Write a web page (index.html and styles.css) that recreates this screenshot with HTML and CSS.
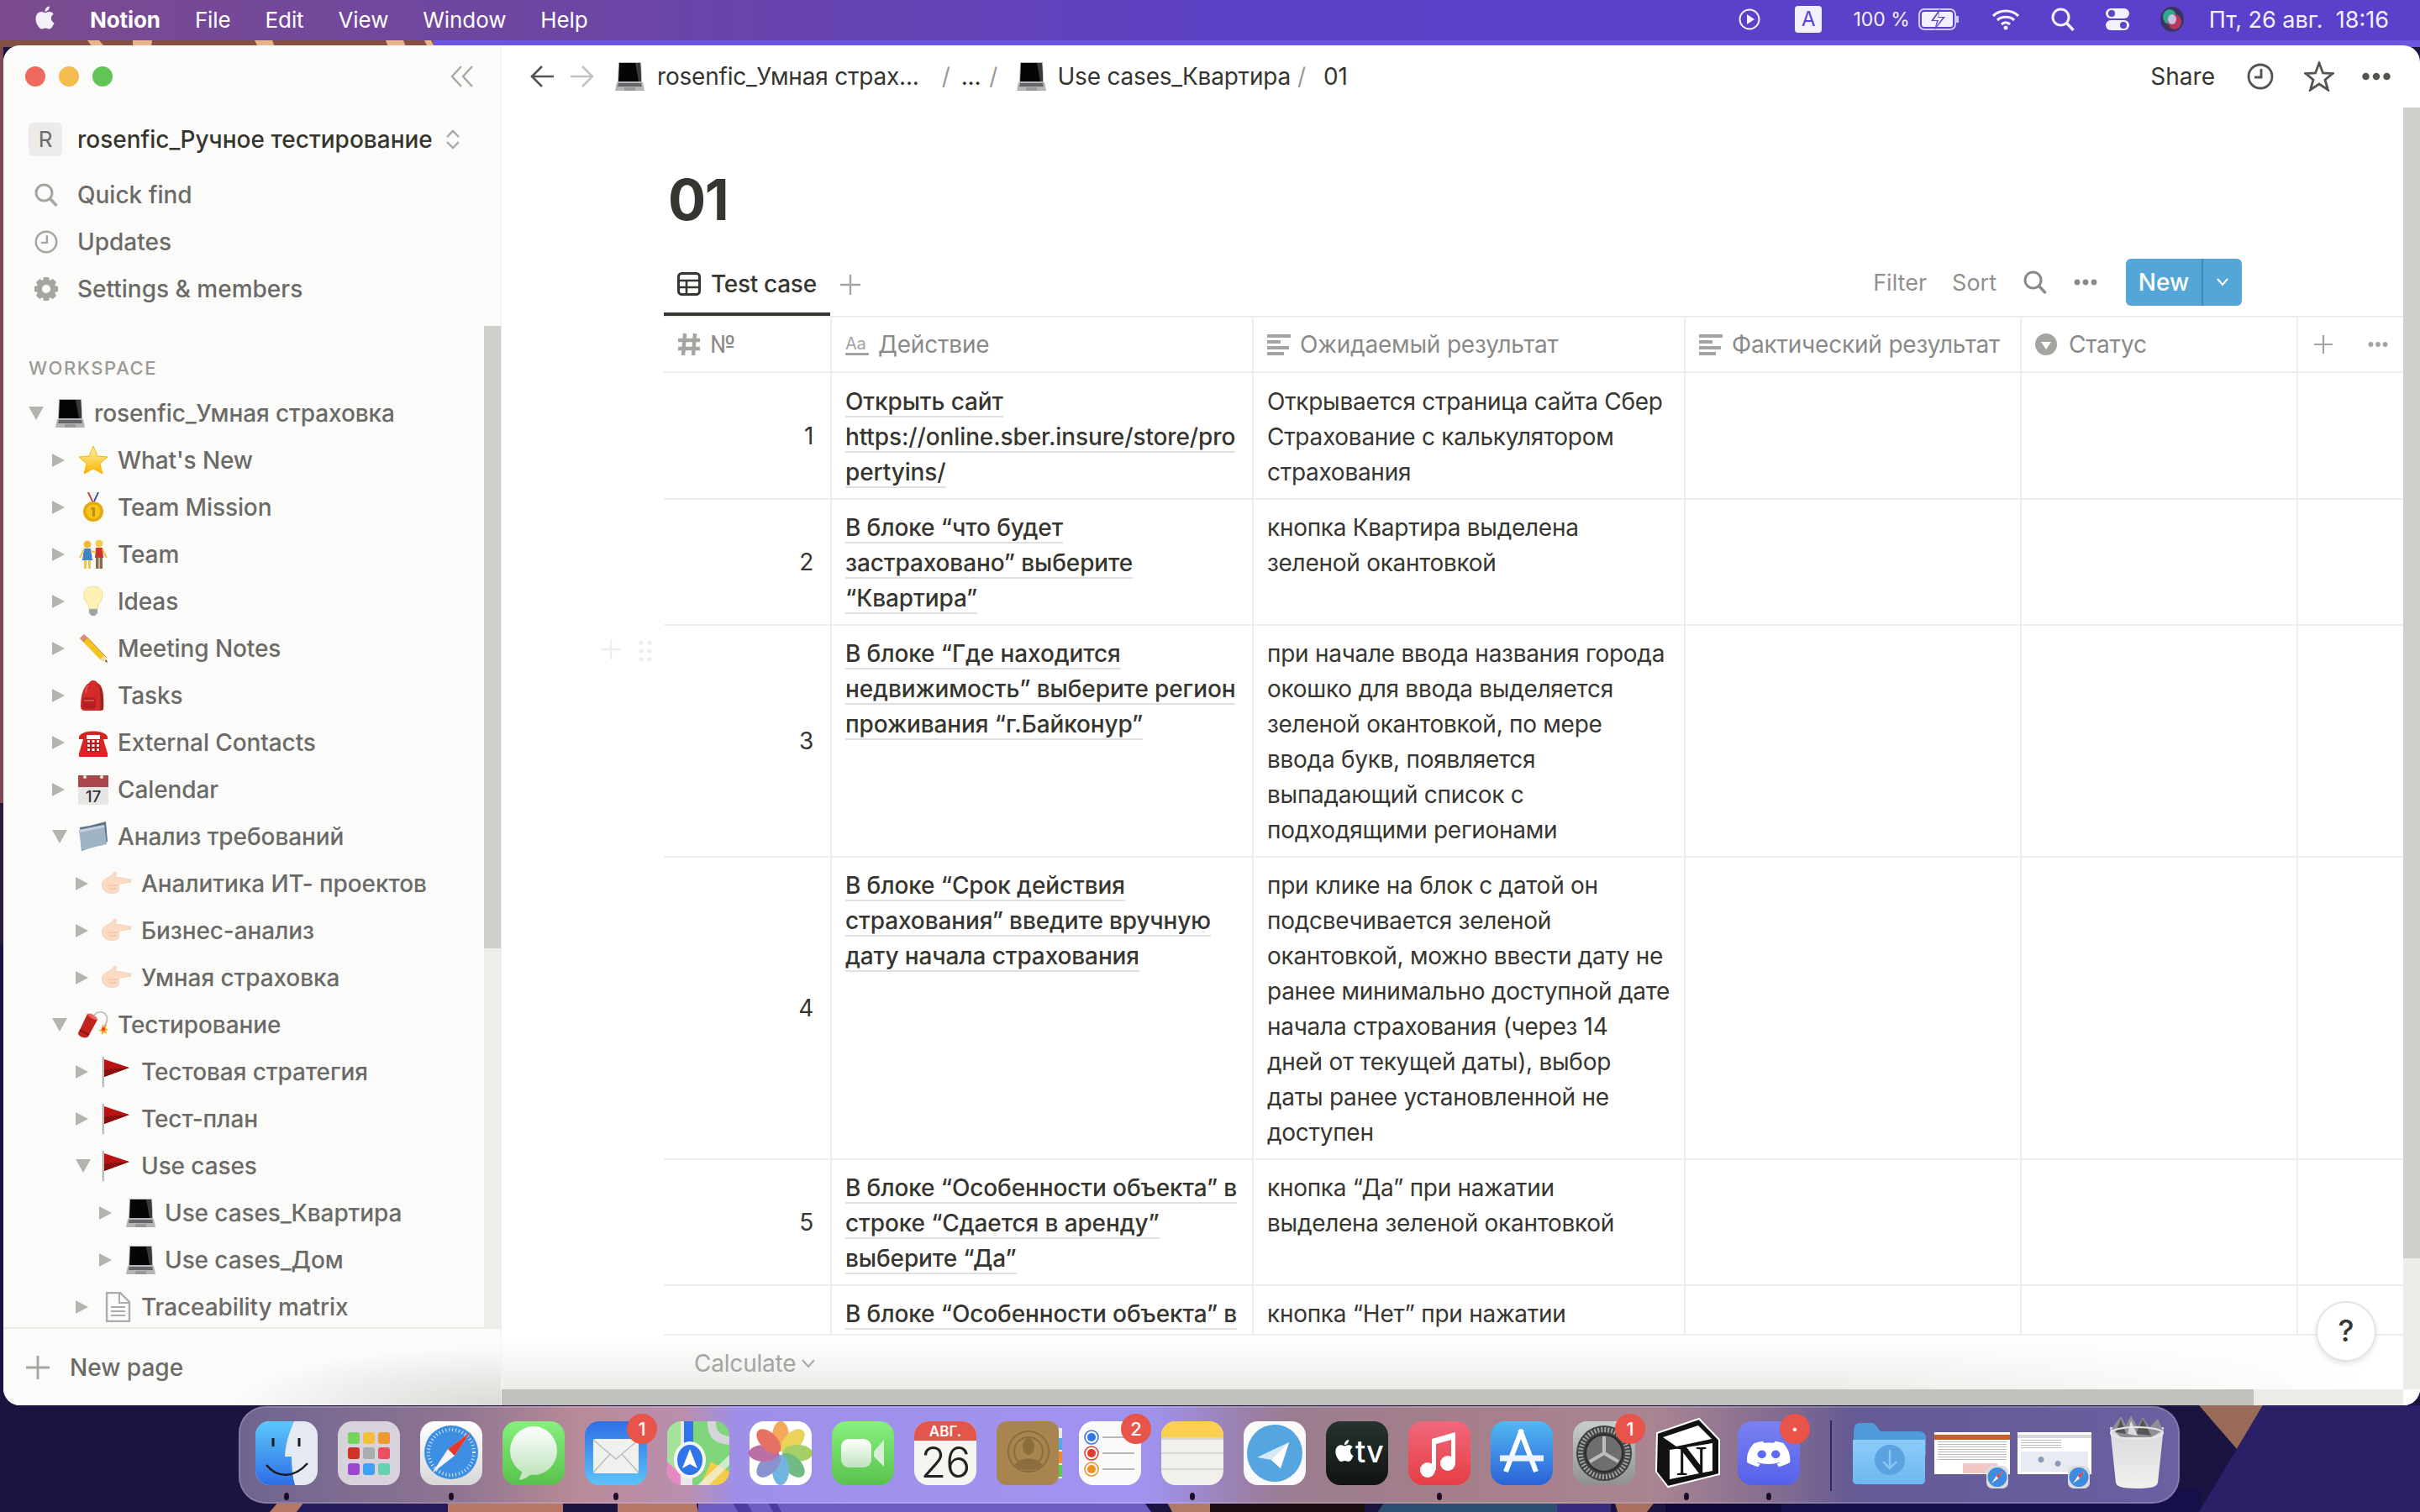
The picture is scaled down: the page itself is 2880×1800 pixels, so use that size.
FILE: index.html
```html
<!DOCTYPE html>
<html lang="ru">
<head>
  <meta charset="UTF-8">
  <title>Notion</title>
  <link rel="stylesheet" href="styles.css">
</head>
<body>

  <!-- shared icons -->
  <svg class="defs" width="0" height="0">
    <defs>
      <clipPath id="sq"><rect width="74" height="76" rx="17"/></clipPath>
      <linearGradient id="gStar" x1="0" y1="0" x2="0" y2="1"><stop offset="0" stop-color="#fff3b0"/><stop offset="1" stop-color="#f7b500"/></linearGradient>
      <linearGradient id="gFinder" x1="0" y1="0" x2="0" y2="1"><stop offset="0" stop-color="#5ac8fa"/><stop offset="1" stop-color="#2f6de6"/></linearGradient>
      <linearGradient id="gGreen" x1="0" y1="0" x2="0" y2="1"><stop offset="0" stop-color="#86ef7e"/><stop offset="1" stop-color="#58c24c"/></linearGradient>
      <linearGradient id="gMail" x1="0" y1="0" x2="0" y2="1"><stop offset="0" stop-color="#2f6fe6"/><stop offset="1" stop-color="#5cc3fa"/></linearGradient>
      <linearGradient id="gStore" x1="0" y1="0" x2="0" y2="1"><stop offset="0" stop-color="#52b8f2"/><stop offset="1" stop-color="#2a62d8"/></linearGradient>
      <linearGradient id="gMusic" x1="0" y1="0" x2="0" y2="1"><stop offset="0" stop-color="#f0687c"/><stop offset="1" stop-color="#e63e44"/></linearGradient>
      <linearGradient id="gDiscord" x1="0" y1="0" x2="0" y2="1"><stop offset="0" stop-color="#7b81f2"/><stop offset="1" stop-color="#5561ea"/></linearGradient>
      <linearGradient id="gTv" x1="0" y1="0" x2="0" y2="1"><stop offset="0" stop-color="#26332f"/><stop offset="1" stop-color="#101413"/></linearGradient>
      <linearGradient id="gGear" x1="0" y1="0" x2="0" y2="1"><stop offset="0" stop-color="#c8cdce"/><stop offset="1" stop-color="#8f9190"/></linearGradient>
      <linearGradient id="gBubble" x1="0" y1="0" x2="0" y2="1"><stop offset="0" stop-color="#ffffff"/><stop offset="1" stop-color="#bfe3bd"/></linearGradient>
      <linearGradient id="gSafari" x1="0" y1="0" x2="0" y2="1"><stop offset="0" stop-color="#ffffff"/><stop offset="1" stop-color="#d8d8d8"/></linearGradient>
      <linearGradient id="gTrash" x1="0" y1="0" x2="0" y2="1"><stop offset="0" stop-color="#d8d8dc"/><stop offset="1" stop-color="#f2f1ee"/></linearGradient>
      <linearGradient id="gFolder" x1="0" y1="0" x2="0" y2="1"><stop offset="0" stop-color="#8ccbf8"/><stop offset="1" stop-color="#6db8f0"/></linearGradient>

      <symbol id="apple" viewBox="0 0 24 24"><path d="M12.152 6.896c-.948 0-2.415-1.078-3.96-1.04-2.04.027-3.91 1.183-4.961 3.014-2.117 3.675-.546 9.103 1.519 12.09 1.013 1.454 2.208 3.09 3.792 3.039 1.52-.065 2.09-.987 3.935-.987 1.831 0 2.35.987 3.96.948 1.637-.026 2.676-1.48 3.676-2.948 1.156-1.688 1.636-3.325 1.662-3.415-.039-.013-3.182-1.221-3.22-4.857-.026-3.04 2.48-4.494 2.597-4.559-1.429-2.09-3.623-2.324-4.39-2.376-2-.156-3.675 1.09-4.61 1.09zM15.53 3.83c.843-1.012 1.4-2.427 1.245-3.83-1.207.052-2.662.805-3.532 1.818-.78.896-1.454 2.338-1.273 3.714 1.338.104 2.715-.688 3.559-1.701"/></symbol>

      <symbol id="caret-r" viewBox="0 0 15 16"><path d="M0 0L15 8L0 16Z" fill="#b4b3b0"/></symbol>
      <symbol id="caret-d" viewBox="0 0 18 16"><path d="M0 0H18L9 16Z" fill="#b4b3b0"/></symbol>

      <symbol id="laptop" viewBox="0 0 36 36">
        <path d="M5 1H32L33 25H4Z" fill="#b9b9bb"/>
        <path d="M6 2H31L32 24H5Z" fill="#050505"/>
        <path d="M25 2H31L32 24H29Z" fill="#3a3a3c"/>
        <path d="M3 25H34L36 35H1Z" fill="#b4b4b6"/>
        <path d="M5 26H32L33 30H4Z" fill="#66666a"/>
        <rect x="12" y="31" width="13" height="4" fill="#98989c"/>
      </symbol>
      <symbol id="star" viewBox="0 0 36 36">
        <path d="M18 1L23 13L35 14L26 22L29 34L18 28L7 34L10 22L1 14L13 13Z" fill="url(#gStar)" stroke="#f5b800" stroke-width="1"/>
      </symbol>
      <symbol id="medal" viewBox="0 0 36 36">
        <path d="M11 0L17 13H19L13 0Z" fill="#c8342e"/><path d="M25 0L19 13H17L23 0Z" fill="#2a45a8"/><path d="M16 0L18 11L20 0Z" fill="#eee"/>
        <circle cx="18" cy="23" r="12" fill="#e3a90f"/><circle cx="18" cy="23" r="8.5" fill="#f6c51d"/>
        <path d="M16 18H20V29H17V21H15Z" fill="#c58c08"/>
      </symbol>
      <symbol id="couple" viewBox="0 0 36 36">
        <circle cx="11" cy="6" r="4.5" fill="#f2b93a"/><circle cx="25" cy="5" r="4.5" fill="#f6c84c"/>
        <path d="M7 11H15L17 25H5Z" fill="#3f83c9"/><rect x="7" y="25" width="3" height="10" fill="#f4c64a"/><rect x="12" y="25" width="3" height="10" fill="#f4c64a"/>
        <path d="M21 10H29L30 22H20Z" fill="#c8352e"/><rect x="21" y="22" width="3.5" height="13" fill="#8a6a4c"/><rect x="25.5" y="22" width="3.5" height="13" fill="#8a6a4c"/>
        <path d="M7 12L2 22M29 12L34 22M15 14L21 16" stroke="#f2c24a" stroke-width="2" fill="none"/>
      </symbol>
      <symbol id="bulb" viewBox="0 0 36 36">
        <path d="M18 0C10 0 7 6 7 11C7 18 13 20 13 27H23C23 20 29 18 29 11C29 6 26 0 18 0Z" fill="#fff2b6" stroke="#f0dc90"/>
        <path d="M13 27H23V32L20 35H16L13 32Z" fill="#a3a3a5"/>
      </symbol>
      <symbol id="pencil" viewBox="0 0 36 36">
        <path d="M2 6L7 1L31 26L35 35L26 31Z" fill="#f4c21f"/>
        <path d="M2 6L7 1L11 5L6 10Z" fill="#e2888a"/>
        <path d="M26 31L31 26L35 35Z" fill="#efd9ae"/>
        <path d="M32 33L33.5 31.5L35 35Z" fill="#333"/>
        <path d="M6 10L11 5L34 29" stroke="#c98a10" fill="none"/>
      </symbol>
      <symbol id="backpack" viewBox="0 0 36 36">
        <path d="M13 3C15 -1 21 -1 23 3C29 6 31 14 30 33C30 35 29 36 27 36H8C5 36 3 34 3 31C3 18 6 7 13 3Z" fill="#d42a2c"/>
        <path d="M24 4C29 9 31 20 30 35H26C27 22 27 14 24 4Z" fill="#8f2a22"/>
        <rect x="5" y="20" width="16" height="14" rx="3" fill="#b81f22"/>
        <path d="M7 24H19" stroke="#ee7a70"/>
        <path d="M12 6C10 8 9 11 9 15" stroke="#ee7a70" fill="none"/>
      </symbol>
      <symbol id="phone" viewBox="0 0 36 36">
        <path d="M1 12C1 2 35 2 35 12V14H26V9H10V14H1Z" fill="#d42424"/>
        <path d="M6 14H30L35 31V35H1V31Z" fill="#d92525"/>
        <rect x="10" y="14" width="16" height="15" fill="#b81a1a"/>
        <g fill="#fff"><rect x="11" y="15" width="3" height="3"/><rect x="16.500" y="15" width="3" height="3"/><rect x="22" y="15" width="3" height="3"/><rect x="11" y="20" width="3" height="3"/><rect x="16.500" y="20" width="3" height="3"/><rect x="22" y="20" width="3" height="3"/><rect x="11" y="25" width="3" height="3"/><rect x="16.500" y="25" width="3" height="3"/><rect x="22" y="25" width="3" height="3"/></g>
      </symbol>
      <symbol id="calendar" viewBox="0 0 36 36">
        <rect y="1" width="36" height="35" fill="#e6e6e4"/>
        <rect y="1" width="36" height="14" fill="#a9474a"/>
        <circle cx="8" cy="3" r="2" fill="#eee"/><circle cx="28" cy="3" r="2" fill="#eee"/>
        <text x="18" y="33" text-anchor="middle" font-family="Inter" font-size="19" fill="#333">17</text>
      </symbol>
      <symbol id="folder" viewBox="0 0 36 36">
        <path d="M2 7L14 5L33 0L35 24L4 35Z" fill="#5f7488"/>
        <path d="M1 10L31 4L34 27L4 34Z" fill="#9fb4c6"/>
        <path d="M1 10L31 4L31.500 7L2 13Z" fill="#c3d2de"/>
      </symbol>
      <symbol id="hand" viewBox="0 0 36 36">
        <path d="M0 21C0 14 6 11 11 9L15 4L18 5L16 10L35 13V16L21 18L20 27C15 31 3 31 0 21Z" fill="#fbdcc3" stroke="#efc3a4" stroke-width=".6"/>
        <path d="M8 20H19M8 24H18" stroke="#e9b79a"/>
      </symbol>
      <symbol id="dynamite" viewBox="0 0 36 36">
        <path d="M11 5L23 12L12 32C9 35 2 33 0 29C0 27 1 25 2 24Z" fill="#c3231d"/>
        <path d="M11 5C14 3 22 7 23 12C20 13 12 9 11 5Z" fill="#e8625a"/>
        <path d="M2 24L13 30" stroke="#8f1511" stroke-width="2"/>
        <path d="M19 9C20 1 31 1 34 8C35 11 34 16 31 20" stroke="#b9b4a6" stroke-width="1.500" fill="none"/>
        <path d="M29 17L31 20L34 18L33 22L36 24L33 25L34 29L31 27L28 30L28 26L24 25L28 23Z" fill="#f4a81c"/>
        <circle cx="30" cy="23" r="2" fill="#e53824"/>
      </symbol>
      <symbol id="flag" viewBox="0 0 36 36">
        <rect x="1" width="1.500" height="36" fill="#9b9b9b"/>
        <path d="M3 3L33 13L3 24Z" fill="#b81414"/>
        <path d="M3 15L33 13L3 24Z" fill="#8a0e0e"/>
      </symbol>
      <symbol id="page" viewBox="0 0 36 36">
        <path d="M6 1H22L33 12V35H6Z" fill="none" stroke="#adacaa" stroke-width="2.400"/>
        <path d="M21 2V13H32M11 18H28M11 23H28M11 28H28" fill="none" stroke="#adacaa" stroke-width="2"/>
      </symbol>

      <symbol id="ic-lines" viewBox="0 0 28 28">
        <path d="M0 2H28V6H0ZM0 9H16V13H0ZM0 16H26V20H0ZM0 23H20V27H0Z" fill="#a5a4a1"/>
      </symbol>
      <symbol id="ic-safari" viewBox="0 0 26 27">
        <rect width="26" height="27" rx="7" fill="#dcdcdc"/>
        <circle cx="13" cy="13.500" r="11.500" fill="#3f8be0"/>
        <path d="M20 6L12 12L6 21L14 15Z" fill="#fff"/><path d="M20 6L12 12L14 15Z" fill="#e2382e"/>
      </symbol>
      <symbol id="ic-plus" viewBox="0 0 24 24">
        <path d="M12 0V24M0 12H24" stroke="currentColor" stroke-width="2.400" fill="none"/>
      </symbol>
      <symbol id="ic-dots" viewBox="0 0 28 8">
        <circle cx="4" cy="4" r="3.400" fill="currentColor"/><circle cx="14" cy="4" r="3.400" fill="currentColor"/><circle cx="24" cy="4" r="3.400" fill="currentColor"/>
      </symbol>
      <symbol id="ic-search" viewBox="0 0 28 28">
        <circle cx="11.500" cy="11.500" r="9.500" fill="none" stroke="currentColor" stroke-width="3"/>
        <path d="M18.500 18.500L26.500 27" stroke="currentColor" stroke-width="3.400" fill="none"/>
      </symbol>
      <symbol id="ic-clock" viewBox="0 0 32 32">
        <circle cx="16" cy="16" r="14" fill="none" stroke="currentColor" stroke-width="2.800"/>
        <path d="M17 7V17H9" fill="none" stroke="currentColor" stroke-width="2.800"/>
      </symbol>
    </defs>
  </svg>

  <!-- wallpaper, behind everything -->
  <svg class="wall" width="2880" height="1800" viewBox="0 0 2880 1800">
    <rect width="2880" height="1800" fill="#1b1440"/>
    <rect x="516" y="48" width="2364" height="8" fill="#6a54e0"/>
    <rect y="48" width="516" height="8" fill="#845045"/>
    <g fill="#e7b48d">
      <path d="M104 48H118L125 56H110Z"/><path d="M158 48H181L180 56H158Z"/><path d="M303 48H324L327 56H307Z"/><path d="M459 48H480L483 56H462Z"/><path d="M505 48H513L517 56H509Z"/>
    </g>
    <rect y="56" width="4" height="900" fill="#7c4a52"/>
    <rect y="956" width="4" height="170" fill="#2a1a3c"/>
    <path d="M321 1800L345 1772H375L353 1800Z" fill="#b87865"/>
    <path d="M353 1800L375 1772H533V1800Z" fill="#241c5c"/>
    <path d="M533 1772H670V1800H533Z" fill="#b87865"/>
    <path d="M735 1772H825L831 1800H735Z" fill="#b87865"/>
    <path d="M831 1772H1350L1370 1800H831Z" fill="#6f5cc0"/>
    <path d="M863 1772H880L895 1800H878ZM905 1772H915L930 1800H920Z" fill="#4a3ca0"/>
    <path d="M1380 1772H1440V1800H1395Z" fill="#b07a68"/>
    <path d="M1440 1772H1624V1800H1440Z" fill="#1a0e12"/>
    <path d="M1640 1800C1650 1780 1660 1785 1680 1785C1720 1778 1800 1780 1853 1790V1800Z" fill="#2b4f70"/>
    <path d="M1853 1772H1917V1800H1853Z" fill="#3a2a80"/>
    <path d="M1917 1772H1982L1960 1800H1925Z" fill="#a9705e"/>
    <path d="M1982 1772H2120V1800H1982Z" fill="#0d0838"/>
    <path d="M2120 1772H2620V1800H2120Z" fill="#15104a"/>
    <path d="M2617 1673H2693L2662 1725Z" fill="#9a6a58"/>
    <path d="M2693 1673H2880V1800H2617L2662 1725Z" fill="#2a2068"/>
  </svg>

  <div class="menubar">
    <svg class="m-apple"><use href="#apple"/></svg>
    <span class="m-item m-app">Notion</span>
    <span class="m-item">File</span>
    <span class="m-item">Edit</span>
    <span class="m-item">View</span>
    <span class="m-item">Window</span>
    <span class="m-item">Help</span>

    <div class="m-status">
      <svg width="26" height="28" viewBox="0 0 26 28"><circle cx="13" cy="14" r="11.500" fill="none" stroke="#f3f0ff" stroke-width="2"/><path d="M10 8L19 14L10 20Z" fill="#f3f0ff"/></svg>
      <span class="m-kbd">A</span>
      <span class="m-pct">100 %</span>
      <svg width="50" height="26" viewBox="0 0 50 26"><rect x="1" y="1" width="43" height="24" rx="6" fill="none" stroke="#cfc8f5" stroke-width="2"/><rect x="4" y="4" width="37" height="18" rx="3" fill="#f3f0ff"/><path d="M46.500 9V17" stroke="#cfc8f5" stroke-width="3"/><path d="M26 0L15 15H22L19 26L32 10H24Z" fill="#5c41cc"/><path d="M25 4L18 14H24L21 22L29 11H23Z" fill="#f3f0ff"/></svg>
      <svg width="34" height="26" viewBox="0 0 34 26"><path d="M2 9C10 1 24 1 32 9M7 14C12 9 22 9 27 14M12 19C15 16 19 16 22 19" fill="none" stroke="#f3f0ff" stroke-width="3.200"/><circle cx="17" cy="23" r="2.500" fill="#f3f0ff"/></svg>
      <svg class="m-white" width="28" height="28"><use href="#ic-search"/></svg>
      <svg width="28" height="28" viewBox="0 0 28 28"><rect y="1" width="28" height="12" rx="6" fill="#f3f0ff"/><circle cx="7" cy="7" r="4" fill="#5c41cc"/><rect y="15" width="28" height="12" rx="6" fill="#f3f0ff"/><circle cx="21" cy="21" r="4" fill="#5c41cc"/></svg>
      <svg width="28" height="30" viewBox="0 0 28 30"><ellipse cx="14" cy="15" rx="14" ry="15" fill="#3a3560"/><ellipse cx="11" cy="12" rx="8" ry="9" fill="#2ea88e"/><ellipse cx="17" cy="18" rx="8" ry="9" fill="#b8365a"/><ellipse cx="14" cy="15" rx="5" ry="6" fill="#c9bfe4"/></svg>
      <span class="m-date">Пт, 26 авг.&nbsp; 18:16</span>
    </div>
  </div>

  <div class="window">
    <div class="sidebar">
      <div class="sb-top">
        <i class="light red"></i><i class="light yellow"></i><i class="light green"></i>
        <svg class="collapse" width="28" height="26" viewBox="0 0 28 26"><path d="M13 1L2 13L13 25M26 1L15 13L26 25" fill="none" stroke="#a9a8a5" stroke-width="2.400"/></svg>
      </div>
      <div class="workspace">
        <span class="ws-icon">R</span>
        <span class="ws-name">rosenfic_Ручное тестирование</span>
        <svg width="18" height="24" viewBox="0 0 18 24"><path d="M2 9L9 2L16 9M2 15L9 22L16 15" fill="none" stroke="#a9a8a5" stroke-width="2.400"/></svg>
      </div>
      <div class="nav"><svg class="nav-ic"><use href="#ic-search"/></svg>Quick find</div>
      <div class="nav"><svg class="nav-ic"><use href="#ic-clock"/></svg>Updates</div>
      <div class="nav"><svg class="nav-ic" viewBox="0 0 28 28"><path d="M11 0H17L18 4L22 2L26 6L24 10L28 11V17L24 18L26 22L22 26L18 24L17 28H11L10 24L6 26L2 22L4 18L0 17V11L4 10L2 6L6 2L10 4Z" fill="currentColor"/><circle cx="14" cy="14" r="5" fill="#fbfbfa"/></svg>Settings &amp; members</div>

      <div class="sb-scroll">
        <div class="sb-track"><div class="sb-thumb"></div></div>
        <div class="ws-label">WORKSPACE</div>
        <div class="row"><svg class="caret down"><use href="#caret-d"/></svg><svg class="emoji"><use href="#laptop"/></svg><span>rosenfic_Умная страховка</span></div>
        <div class="row l1"><svg class="caret"><use href="#caret-r"/></svg><svg class="emoji"><use href="#star"/></svg><span>What's New</span></div>
        <div class="row l1"><svg class="caret"><use href="#caret-r"/></svg><svg class="emoji"><use href="#medal"/></svg><span>Team Mission</span></div>
        <div class="row l1"><svg class="caret"><use href="#caret-r"/></svg><svg class="emoji"><use href="#couple"/></svg><span>Team</span></div>
        <div class="row l1"><svg class="caret"><use href="#caret-r"/></svg><svg class="emoji"><use href="#bulb"/></svg><span>Ideas</span></div>
        <div class="row l1"><svg class="caret"><use href="#caret-r"/></svg><svg class="emoji"><use href="#pencil"/></svg><span>Meeting Notes</span></div>
        <div class="row l1"><svg class="caret"><use href="#caret-r"/></svg><svg class="emoji"><use href="#backpack"/></svg><span>Tasks</span></div>
        <div class="row l1"><svg class="caret"><use href="#caret-r"/></svg><svg class="emoji"><use href="#phone"/></svg><span>External Contacts</span></div>
        <div class="row l1"><svg class="caret"><use href="#caret-r"/></svg><svg class="emoji"><use href="#calendar"/></svg><span>Calendar</span></div>
        <div class="row l1"><svg class="caret down"><use href="#caret-d"/></svg><svg class="emoji"><use href="#folder"/></svg><span>Анализ требований</span></div>
        <div class="row l2"><svg class="caret"><use href="#caret-r"/></svg><svg class="emoji"><use href="#hand"/></svg><span>Аналитика ИТ- проектов</span></div>
        <div class="row l2"><svg class="caret"><use href="#caret-r"/></svg><svg class="emoji"><use href="#hand"/></svg><span>Бизнес-анализ</span></div>
        <div class="row l2"><svg class="caret"><use href="#caret-r"/></svg><svg class="emoji"><use href="#hand"/></svg><span>Умная страховка</span></div>
        <div class="row l1"><svg class="caret down"><use href="#caret-d"/></svg><svg class="emoji"><use href="#dynamite"/></svg><span>Тестирование</span></div>
        <div class="row l2"><svg class="caret"><use href="#caret-r"/></svg><svg class="emoji"><use href="#flag"/></svg><span>Тестовая стратегия</span></div>
        <div class="row l2"><svg class="caret"><use href="#caret-r"/></svg><svg class="emoji"><use href="#flag"/></svg><span>Тест-план</span></div>
        <div class="row l2"><svg class="caret down"><use href="#caret-d"/></svg><svg class="emoji"><use href="#flag"/></svg><span>Use cases</span></div>
        <div class="row l3"><svg class="caret"><use href="#caret-r"/></svg><svg class="emoji"><use href="#laptop"/></svg><span>Use cases_Квартира</span></div>
        <div class="row l3"><svg class="caret"><use href="#caret-r"/></svg><svg class="emoji"><use href="#laptop"/></svg><span>Use cases_Дом</span></div>
        <div class="row l2"><svg class="caret"><use href="#caret-r"/></svg><svg class="emoji"><use href="#page"/></svg><span>Traceability matrix</span></div>
      </div>

      <div class="new-page"><svg width="28" height="28"><use href="#ic-plus"/></svg>New page</div>
    </div>

    <div class="main">
      <div class="topbar">
        <svg class="arrow" width="28" height="28" viewBox="0 0 28 28"><path d="M14 2L2 14L14 26M2 14H28" fill="none" stroke="#55534e" stroke-width="2.600"/></svg>
        <svg class="arrow fwd" width="28" height="28" viewBox="0 0 28 28"><path d="M14 2L26 14L14 26M26 14H0" fill="none" stroke="#c4c3c0" stroke-width="2.600"/></svg>
        <svg class="crumb-ic"><use href="#laptop"/></svg>
        <span class="crumb c1">rosenfic_Умная страх...</span>
        <span class="slash s1">/</span>
        <span class="crumb">...</span>
        <span class="slash s2">/</span>
        <svg class="crumb-ic c2"><use href="#laptop"/></svg>
        <span class="crumb">Use cases_Квартира</span>
        <span class="slash s3">/</span>
        <span class="crumb">01</span>
        <div class="top-right">
          <span class="share">Share</span>
          <svg class="top-ic clock"><use href="#ic-clock"/></svg>
          <svg class="top-ic star-o" viewBox="0 0 36 36"><path d="M18 2L22.500 14L34 14.500L25 22L28.500 34L18 27L7.500 34L11 22L2 14.500L13.500 14Z" fill="none" stroke="currentColor" stroke-width="2.800"/></svg>
          <svg class="top-dots"><use href="#ic-dots"/></svg>
        </div>
      </div>

      <div class="content">
        <div class="page">
          <div class="grip"><svg width="24" height="24"><use href="#ic-plus"/></svg><svg width="20" height="28" viewBox="0 0 20 28"><g fill="#eeeeec"><circle cx="4" cy="4" r="2.500"/><circle cx="14" cy="4" r="2.500"/><circle cx="4" cy="14" r="2.500"/><circle cx="14" cy="14" r="2.500"/><circle cx="4" cy="24" r="2.500"/><circle cx="14" cy="24" r="2.500"/></g></svg></div>

          <h1 class="title">01</h1>

          <div class="views">
            <div class="tab">
              <svg width="28" height="28" viewBox="0 0 28 28"><rect x="1.500" y="1.500" width="25" height="25" rx="4" fill="none" stroke="#37352f" stroke-width="3"/><path d="M1 10H27M1 18H27M11 10V27" stroke="#37352f" stroke-width="2.600"/></svg>
              Test case
            </div>
            <svg class="tab-plus" width="24" height="24"><use href="#ic-plus"/></svg>
            <div class="tools">
              <span class="t-filter">Filter</span>
              <span class="t-sort">Sort</span>
              <svg width="28" height="28"><use href="#ic-search"/></svg>
              <svg class="tools-dots" width="28" height="8"><use href="#ic-dots"/></svg>
              <div class="new-btn"><span class="new-l">New</span><span class="new-r"><svg width="16" height="10" viewBox="0 0 16 10"><path d="M2 1L8 8L14 1" fill="none" stroke="#fff" stroke-width="2"/></svg></span></div>
            </div>
          </div>

          <div class="table">
            <div class="thead">
              <div class="th"><svg width="28" height="28" viewBox="0 0 28 28"><path d="M9 1L7 27M21 1L19 27M1 9H27M1 19H27" stroke="#a5a4a1" stroke-width="4.400" fill="none"/></svg>№</div>
              <div class="th"><svg width="28" height="28" viewBox="0 0 28 28"><text x="0" y="20" font-family="Inter" font-size="20" fill="#a5a4a1">Aa</text><rect y="24" width="28" height="3" fill="#a5a4a1"/></svg>Действие</div>
              <div class="th"><svg width="28" height="28"><use href="#ic-lines"/></svg>Ожидаемый результат</div>
              <div class="th"><svg width="28" height="28"><use href="#ic-lines"/></svg>Фактический результат</div>
              <div class="th th-status"><svg width="26" height="26" viewBox="0 0 26 26"><circle cx="13" cy="13" r="13" fill="#a5a4a1"/><path d="M7 10H19L13 19Z" fill="#fff"/></svg>Статус</div>
              <div class="th th-end"><svg class="t-plus" width="22" height="22"><use href="#ic-plus"/></svg><svg class="t-dots" width="24" height="8"><use href="#ic-dots"/></svg></div>
            </div>

            <div class="tr first">
              <div class="td num">1</div>
              <div class="td"><span class="link">Открыть сайт</span><br><span class="link">https://online.sber.insure/store/pro</span><br><span class="link">pertyins/</span></div>
              <div class="td">Открывается страница сайта Сбер<br>Страхование с калькулятором<br>страхования</div>
              <div class="td"></div><div class="td"></div><div class="td"></div>
            </div>
            <div class="tr">
              <div class="td num">2</div>
              <div class="td"><span class="link">В блоке “что будет</span><br><span class="link">застраховано” выберите</span><br><span class="link">“Квартира”</span></div>
              <div class="td">кнопка Квартира выделена<br>зеленой окантовкой</div>
              <div class="td"></div><div class="td"></div><div class="td"></div>
            </div>
            <div class="tr">
              <div class="td num">3</div>
              <div class="td"><span class="link">В блоке “Где находится</span><br><span class="link">недвижимость” выберите регион</span><br><span class="link">проживания “г.Байконур”</span></div>
              <div class="td">при начале ввода названия города<br>окошко для ввода выделяется<br>зеленой окантовкой, по мере<br>ввода букв, появляется<br>выпадающий список с<br>подходящими регионами</div>
              <div class="td"></div><div class="td"></div><div class="td"></div>
            </div>
            <div class="tr">
              <div class="td num">4</div>
              <div class="td"><span class="link">В блоке “Срок действия</span><br><span class="link">страхования” введите вручную</span><br><span class="link">дату начала страхования</span></div>
              <div class="td">при клике на блок с датой он<br>подсвечивается зеленой<br>окантовкой, можно ввести дату не<br>ранее минимально доступной дате<br>начала страхования (через 14<br>дней от текущей даты), выбор<br>даты ранее установленной не<br>доступен</div>
              <div class="td"></div><div class="td"></div><div class="td"></div>
            </div>
            <div class="tr">
              <div class="td num">5</div>
              <div class="td"><span class="link">В блоке “Особенности объекта” в</span><br><span class="link">строке “Сдается в аренду”</span><br><span class="link">выберите “Да”</span></div>
              <div class="td">кнопка “Да” при нажатии<br>выделена зеленой окантовкой</div>
              <div class="td"></div><div class="td"></div><div class="td"></div>
            </div>
            <div class="tr">
              <div class="td num"></div>
              <div class="td"><span class="link">В блоке “Особенности объекта” в</span></div>
              <div class="td">кнопка “Нет” при нажатии</div>
              <div class="td"></div><div class="td"></div><div class="td"></div>
            </div>
          </div>

          <div class="calc">Calculate <svg width="18" height="12" viewBox="0 0 18 12"><path d="M2 2L9 10L16 2" fill="none" stroke="#a9a8a5" stroke-width="2"/></svg></div>
        </div>
        <div class="v-track"><div class="v-thumb"></div></div>
      </div>

      <div class="h-track"><div class="h-thumb"></div><div class="h-corner"></div></div>
      <div class="help">?</div>
    </div>
  </div>

  <div class="dock">
    <div class="dk on"><svg viewBox="0 0 74 76"><g clip-path="url(#sq)"><rect width="74" height="76" fill="#e4e9f2"/><path d="M0 0H46C40 14 36 26 35 42H43C43 54 44 66 47 76H0Z" fill="url(#gFinder)"/><path d="M21 20V30M52 20V30" stroke="#1a1a1a" stroke-width="3"/><path d="M13 52C26 68 46 68 62 50" fill="none" stroke="#1a1a1a" stroke-width="2.500"/></g></svg></div>

    <div class="dk"><svg viewBox="0 0 74 76"><rect width="74" height="76" rx="17" fill="#d8d2dc"/><rect x="12" y="13" width="14" height="14" rx="3" fill="#74d35a"/><rect x="30" y="13" width="14" height="14" rx="3" fill="#f6bf3a"/><rect x="48" y="13" width="14" height="14" rx="3" fill="#ee9a30"/><rect x="12" y="31" width="14" height="14" rx="3" fill="#cf3328"/><rect x="30" y="31" width="14" height="14" rx="3" fill="#a8adb0"/><rect x="48" y="31" width="14" height="14" rx="3" fill="#ea5060"/><rect x="12" y="50" width="14" height="14" rx="3" fill="#9a48d0"/><rect x="30" y="50" width="14" height="14" rx="3" fill="#3fa0f5"/><rect x="48" y="50" width="14" height="14" rx="3" fill="#66d2b0"/></svg></div>

    <div class="dk on"><svg viewBox="0 0 74 76"><rect width="74" height="76" rx="17" fill="url(#gSafari)"/><circle cx="37" cy="37" r="32" fill="#3c8ee2"/><circle cx="37" cy="37" r="27" fill="none" stroke="#dfeefc" stroke-width="4" stroke-dasharray="1 3"/><path d="M60 13L33 33L14 62L41 41Z" fill="#f4f4f4"/><path d="M60 13L33 33L41 41Z" fill="#e2382e"/></svg></div>

    <div class="dk"><svg viewBox="0 0 74 76"><rect width="74" height="76" rx="17" fill="url(#gGreen)"/><ellipse cx="37" cy="35" rx="28" ry="29" fill="url(#gBubble)"/><path d="M24 58L20 70C26 69 31 66 35 62Z" fill="#c6e6c4"/></svg></div>

    <div class="dk on"><svg viewBox="0 0 74 76"><rect width="74" height="76" rx="17" fill="url(#gMail)"/><rect x="10" y="21" width="54" height="41" rx="2" fill="#f0f0ee"/><path d="M10 22L37 45L64 22M10 61L30 39M64 61L44 39" fill="none" stroke="#bdbdbb" stroke-width="1.500"/></svg><b class="badge">1</b></div>

    <div class="dk"><svg viewBox="0 0 74 76"><g clip-path="url(#sq)"><rect width="74" height="76" fill="#7fd67a"/><path d="M0 0H20V40L0 76Z" fill="#a6e29a"/><path d="M0 48L30 76H0Z" fill="#e889c4"/><path d="M40 76L74 76V60L52 48Z" fill="#f5cc45"/><path d="M16 0H30V76H16Z" fill="#e8e8ea"/><path d="M20 0H31V36H20Z" fill="#2f74e8"/><path d="M36 76L74 40V52L50 76Z" fill="#f2f2f2" opacity=".7"/><path d="M48 0C48 20 56 26 74 28V18C62 16 58 12 58 0Z" fill="#d4d4da"/><ellipse cx="27" cy="46" rx="19" ry="22" fill="#f4f4f6"/><ellipse cx="27" cy="46" rx="15" ry="18" fill="#2f74e8"/><path d="M27 33L36 56L27 51L18 56Z" fill="#fff"/></g></svg></div>

    <div class="dk"><svg viewBox="0 0 74 76"><rect width="74" height="76" rx="17" fill="#fff"/><g opacity=".78" transform="translate(37 38)"><ellipse cy="-20" rx="10" ry="18" fill="#f0902c"/><ellipse cy="-20" rx="10" ry="18" fill="#e6c62e" transform="rotate(45)"/><ellipse cy="-20" rx="10" ry="18" fill="#8cc33c" transform="rotate(90)"/><ellipse cy="-20" rx="10" ry="18" fill="#4aa860" transform="rotate(135)"/><ellipse cy="-20" rx="10" ry="18" fill="#4ea0d8" transform="rotate(180)"/><ellipse cy="-20" rx="10" ry="18" fill="#6a74c0" transform="rotate(225)"/><ellipse cy="-20" rx="10" ry="18" fill="#a8488c" transform="rotate(270)"/><ellipse cy="-20" rx="10" ry="18" fill="#e04b3a" transform="rotate(315)"/></g></svg></div>

    <div class="dk"><svg viewBox="0 0 74 76"><rect width="74" height="76" rx="17" fill="url(#gGreen)"/><rect x="11" y="21" width="36" height="34" rx="9" fill="url(#gBubble)"/><path d="M50 36L62 22V54L50 42Z" fill="#d8efd6"/></svg></div>

    <div class="dk"><svg viewBox="0 0 74 76"><g clip-path="url(#sq)"><rect width="74" height="76" fill="#f6f5f2"/><rect width="74" height="23" fill="#e4564c"/></g><text class="cal-m" x="37" y="18" text-anchor="middle">АВГ.</text><text class="cal-d" x="37" y="67" text-anchor="middle">26</text></svg></div>

    <div class="dk"><svg viewBox="0 0 80 76" class="wide"><path d="M60 8H78V68H60Z" fill="#e8e8e8"/><rect x="72" y="20" width="6" height="14" fill="#4fa8e8"/><rect x="72" y="36" width="6" height="14" fill="#ee8a2e"/><rect x="72" y="52" width="6" height="14" fill="#5ac84f"/><rect width="74" height="76" rx="12" fill="#a8854f"/><circle cx="38" cy="36" r="24" fill="none" stroke="#8c6d3e" stroke-width="2"/><circle cx="38" cy="36" r="17" fill="none" stroke="#8c6d3e" stroke-width="2"/><ellipse cx="38" cy="30" rx="7" ry="10" fill="#8c6d3e"/><path d="M22 52C26 42 50 42 54 52C48 60 28 60 22 52Z" fill="#8c6d3e"/></svg></div>

    <div class="dk"><svg viewBox="0 0 74 76"><rect width="74" height="76" rx="17" fill="#fafafa"/><circle cx="15" cy="19" r="5" fill="#2f74e8"/><circle cx="15" cy="19" r="8" fill="none" stroke="#2f74e8" stroke-width="1.500"/><circle cx="15" cy="38" r="5" fill="#e2382e"/><circle cx="15" cy="38" r="8" fill="none" stroke="#e2382e" stroke-width="1.500"/><circle cx="15" cy="57" r="5" fill="#ee9020"/><circle cx="15" cy="57" r="8" fill="none" stroke="#ee9020" stroke-width="1.500"/><path d="M28 19H66M28 38H66M28 57H66" stroke="#b8b8b8" stroke-width="2"/></svg><b class="badge">2</b></div>

    <div class="dk on"><svg viewBox="0 0 74 76"><g clip-path="url(#sq)"><rect width="74" height="76" fill="#f1f0ea"/><rect width="74" height="19" fill="#fbd04f"/><rect y="19" width="74" height="3" fill="#d8d6cf"/><path d="M0 38H74M0 57H74" stroke="#d9d8d2" stroke-width="2"/></g></svg></div>

    <div class="dk"><svg viewBox="0 0 74 76"><rect width="74" height="76" rx="17" fill="#fafafa"/><ellipse cx="37" cy="38" rx="33" ry="34" fill="#55a6e0"/><path d="M54 25L16 43L33 46L44 56Z" fill="#d6e9f8"/><path d="M54 25L33 46L44 56Z" fill="#fff"/></svg></div>

    <div class="dk"><svg viewBox="0 0 74 76"><rect width="74" height="76" rx="17" fill="url(#gTv)"/><use href="#apple" x="9" y="21" width="26" height="28" fill="#fff"/><text class="tv" x="35" y="49">tv</text></svg></div>

    <div class="dk on"><svg viewBox="0 0 74 76"><rect width="74" height="76" rx="17" fill="url(#gMusic)"/><path d="M28 21L56 13V50H51V22L33 27V58H28Z" fill="#fff"/><ellipse cx="23" cy="58" rx="9" ry="9" fill="#fff"/><ellipse cx="47" cy="50" rx="9" ry="9" fill="#fff"/></svg></div>

    <div class="dk"><svg viewBox="0 0 74 76"><rect width="74" height="76" rx="17" fill="url(#gStore)"/><path d="M37 10L18 60M35 10L54 60" stroke="#fff" stroke-width="6" fill="none"/><path d="M11 44H63" stroke="#eaf3ff" stroke-width="7" fill="none"/></svg></div>

    <div class="dk"><svg viewBox="0 0 74 76"><rect width="74" height="76" rx="17" fill="url(#gGear)"/><circle cx="37" cy="38" r="33" fill="#3f4142"/><circle cx="37" cy="38" r="28" fill="none" stroke="#a2a4a4" stroke-width="6" stroke-dasharray="2 2"/><circle cx="37" cy="38" r="22" fill="#6c6e6f" stroke="#2a2b2c" stroke-width="2"/><path d="M37 38V18M37 38L20 48M37 38L54 48" stroke="#bcbebe" stroke-width="4"/></svg><b class="badge b-gear">1</b></div>

    <div class="dk on"><svg viewBox="0 0 74 76"><path d="M2 14L52 -3L76 22V63L15 78L1 60Z" fill="#111" stroke="#fff" stroke-width="2"/><path d="M9 19L51 5L67 21L25 30Z" fill="#fff"/><path d="M17 34L68 26V59L17 69Z" fill="#fff"/><text class="notion-n" x="43" y="64" text-anchor="middle">N</text></svg></div>

    <div class="dk on"><svg viewBox="0 0 74 76"><rect width="74" height="76" rx="17" fill="url(#gDiscord)"/><svg x="11" y="19" width="52" height="40" viewBox="0 0 24 24" preserveAspectRatio="none"><path fill="#fff" d="M20.317 4.37a19.79 19.79 0 0 0-4.885-1.515c-.211.375-.445.865-.608 1.25a18.27 18.27 0 0 0-5.487 0c-.164-.393-.406-.874-.618-1.25A19.74 19.74 0 0 0 3.834 4.37C.533 9.046-.319 13.58.099 18.058c2.053 1.508 4.041 2.423 5.993 3.029.462-.63.873-1.295 1.226-1.994-.653-.248-1.274-.55-1.872-.892.126-.094.252-.192.372-.291 3.928 1.793 8.18 1.793 12.061 0 .12.099.246.198.373.292-.598.349-1.221.645-1.873.891.36.698.772 1.363 1.225 1.993 1.961-.607 3.95-1.522 6.002-3.029.5-5.177-.838-9.674-3.549-13.66z"/><ellipse cx="8.2" cy="12.200" rx="2.400" ry="2.900" fill="#5f6bee"/><ellipse cx="15.800" cy="12.200" rx="2.400" ry="2.900" fill="#5f6bee"/></svg></svg><b class="badge b-disc">•</b></div>

    <i class="dock-sep"></i>

    <div class="dk folder"><svg viewBox="0 0 88 76"><path d="M2 14C2 6 4 2 10 2H24C28 2 30 8 34 12H80C84 12 88 14 88 20V40H2Z" fill="#4f9ad8"/><path d="M1 22H87V70C87 73 85 75 82 75H6C3 75 1 73 1 70Z" fill="url(#gFolder)"/><circle cx="45" cy="46" r="18" fill="#5aa3e0"/><path d="M45 34V56M37 48L45 56L53 48" stroke="#8cc6f2" stroke-width="2.400" fill="none"/></svg></div>

    <div class="dk doc d1"><div class="thumb t1"><i class="t-head"></i><i class="t-lines"></i><i class="t-foot"></i></div><svg class="thumb-s"><use href="#ic-safari"/></svg></div>
    <div class="dk doc d2"><div class="thumb t2"><i class="t-bar"></i><i class="t-lines short"></i><i class="t-map"></i></div><svg class="thumb-s"><use href="#ic-safari"/></svg></div>

    <div class="dk trash"><svg viewBox="0 0 66 88"><path d="M1 14H65L58 80C57 85 50 87 33 87C16 87 9 85 8 80Z" fill="url(#gTrash)"/><path d="M3 16L14 1L20 12L26 0L34 14L40 2L48 14L58 4L64 18L50 26H14Z" fill="#8f8f94"/><path d="M14 4L20 22L8 20ZM40 4L50 24L32 22Z" fill="#55555a"/><path d="M26 6L34 24L22 22Z" fill="#dcdcdc"/><ellipse cx="33" cy="21" rx="31" ry="7" fill="none" stroke="#e8e8e8" stroke-width="2"/></svg></div>
  </div>

</body>
</html>
```

FILE: styles.css
```css
* {
  box-sizing: border-box;
}
body {
  margin: 0;
  width: 2880px;
  height: 1800px;
  overflow: hidden;
  position: relative;
  font-family: Inter, "Liberation Sans", sans-serif;
  font-size: 28px;
  color: #37352f;
  background-color: #1b1440;
}
.defs {
  position: absolute;
}
.wall {
  position: absolute;
  left: 0;
  top: 0;
}

/* menu bar */
.menubar {
  position: relative;
  height: 48px;
  display: flex;
  align-items: center;
  padding: 0 0 2px 40px;
  color: #fff;
  font-size: 26px;
  letter-spacing: -0.1px;
  background: linear-gradient(to right, #7a4b8e 0, #6a45a8 800px, #5b40c6 1500px, #5b40cc 100%);
}
.m-apple {
  width: 27px;
  height: 32px;
  fill: #f4f0f8;
  margin-right: 40px;
  margin-top: -4px;
}
.m-item {
  margin-right: 41px;
}
.m-app {
  font-weight: 700;
}
.m-status {
  margin-left: auto;
  display: flex;
  align-items: center;
  gap: 37px;
  padding-right: 37px;
  color: #f3f0ff;
  letter-spacing: 0;
}
.m-kbd {
  width: 32px;
  height: 32px;
  margin: 0 0 0 4px;
  border-radius: 4px;
  background-color: #f3f0ff;
  color: #5c41cc;
  text-align: center;
  line-height: 32px;
  font-size: 24px;
}
.m-pct {
  font-size: 23px;
  margin-right: -27px;
}
.m-white {
  color: #f3f0ff;
}
.m-date {
  font-size: 27px;
  margin-left: -7px;
}

/* window */
.window {
  position: relative;
  display: flex;
  width: 2876px;
  height: 1619px;
  margin: 6px 0 0 4px;
  border-radius: 20px;
  overflow: hidden;
  background-color: #fff;
}
.sidebar {
  width: 593px;
  flex: none;
  display: flex;
  flex-direction: column;
  background-color: #fbfbfa;
  border-right: 1px solid #f1f1ef;
}
.sb-top {
  height: 74px;
  flex: none;
  display: flex;
  align-items: center;
  gap: 16px;
  padding: 0 32px 0 26px;
}
.light {
  width: 24px;
  height: 24px;
  border-radius: 50%;
}
.red {
  background-color: #ee6a5f;
}
.yellow {
  background-color: #f5bd4f;
}
.green {
  background-color: #61c454;
}
.collapse {
  margin-left: auto;
}
.workspace {
  height: 76px;
  flex: none;
  display: flex;
  align-items: center;
  padding-left: 30px;
}
.ws-icon {
  width: 40px;
  height: 40px;
  margin-right: 18px;
  border-radius: 6px;
  background-color: #ecebe9;
  color: #6b6a66;
  text-align: center;
  line-height: 40px;
  font-size: 26px;
}
.ws-name {
  margin-right: 15px;
  font-weight: 500;
}
.nav {
  height: 56px;
  flex: none;
  display: flex;
  align-items: center;
  padding-left: 37px;
  gap: 23px;
  color: #6b6a66;
  font-weight: 500;
}
.nav-ic {
  width: 28px;
  height: 28px;
  color: #a5a4a1;
}
.sb-scroll {
  position: relative;
  height: 1192px;
  margin-top: 16px;
  flex: none;
  overflow: hidden;
}
.sb-track {
  position: absolute;
  right: 0;
  top: 0;
  bottom: 0;
  width: 20px;
  background-color: #edede9;
}
.sb-thumb {
  height: 741px;
  background-color: #d0d0ca;
}
.ws-label {
  height: 76px;
  padding: 38px 0 0 30px;
  line-height: 24px;
  font-size: 22px;
  font-weight: 500;
  letter-spacing: 1.6px;
  color: #9b9a97;
}
.row {
  height: 56px;
  display: flex;
  align-items: center;
  padding-left: 30px;
  color: #6b6a66;
  font-weight: 500;
  letter-spacing: -0.1px;
}
.row.l1 {
  padding-left: 58px;
}
.row.l2 {
  padding-left: 86px;
}
.row.l3 {
  padding-left: 114px;
}
.caret {
  width: 15px;
  height: 16px;
  margin-right: 16px;
  flex: none;
}
.caret.down {
  width: 18px;
  margin-right: 13px;
}
.emoji {
  width: 36px;
  height: 36px;
  margin-right: 11px;
  flex: none;
}
.new-page {
  height: 93px;
  flex: none;
  display: flex;
  align-items: center;
  gap: 24px;
  padding-left: 27px;
  border-top: 2px solid #ecece9;
  color: #6b6a66;
  font-weight: 500;
  background: radial-gradient(ellipse 320px 70px at 100% 100%, #d9d9d6, rgba(251, 251, 250, 0));
}
.new-page svg {
  color: #a5a4a1;
}

/* main area */
.main {
  position: relative;
  flex: 1;
  min-width: 0;
  display: flex;
  flex-direction: column;
}
.topbar {
  height: 74px;
  flex: none;
  display: flex;
  align-items: center;
  padding-left: 34px;
}
.arrow.fwd {
  margin-left: 20px;
}
.crumb-ic {
  width: 36px;
  height: 36px;
  margin-left: 24px;
  margin-right: 15px;
}
.crumb-ic.c2 {
  margin-left: 12px;
  margin-right: 13px;
}
.crumb {
  white-space: nowrap;
  letter-spacing: -0.2px;
}
.slash {
  color: #9b9a97;
  margin: 0 16px;
}
.slash.s1 {
  margin: 0 13px 0 27px;
}
.slash.s2 {
  margin: 0 10px;
}
.slash.s3 {
  margin: 0 21px 0 8px;
}
.top-right {
  margin-left: auto;
  display: flex;
  align-items: center;
  padding-right: 34px;
  color: #55534e;
}
.share {
  color: #37352f;
  margin-right: 38px;
}
.top-ic {
  width: 32px;
  height: 32px;
}
.star-o {
  width: 36px;
  height: 36px;
  margin-left: 36px;
}
.top-dots {
  width: 36px;
  height: 10px;
  margin-left: 32px;
}
.content {
  flex: 1;
  min-height: 0;
  display: flex;
}
.page {
  position: relative;
  flex: 1;
  min-width: 0;
  display: flex;
  flex-direction: column;
  padding-left: 193px;
  overflow: hidden;
}
.grip {
  position: absolute;
  left: 118px;
  top: 633px;
  display: flex;
  gap: 20px;
  color: #eeeeec;
}
.title {
  height: 168px;
  flex: none;
  margin: 0;
  padding: 70px 0 0 5px;
  font-size: 67px;
  letter-spacing: -1.5px;
  line-height: 80px;
  font-weight: 700;
}
.views {
  height: 80px;
  flex: none;
  display: flex;
  align-items: center;
  padding-right: 192px;
}
.tab {
  width: 198px;
  height: 80px;
  padding: 8px 0 0 16px;
  display: flex;
  align-items: center;
  gap: 12px;
  border-bottom: 4px solid #37352f;
  font-weight: 500;
  letter-spacing: -0.3px;
}
.tab-plus {
  margin: 6px 0 0 12px;
  color: #a5a4a1;
}
.tools {
  margin-left: auto;
  display: flex;
  align-items: center;
  color: #91908c;
  font-size: 27px;
}
.t-filter {
  margin-right: 30px;
}
.t-sort {
  margin-right: 32px;
}
.tools svg {
  color: #8b8a86;
}
.tools-dots {
  margin: 0 34px 0 32px;
}
.new-btn {
  width: 138px;
  height: 56px;
  display: flex;
  border-radius: 6px;
  overflow: hidden;
  background-color: #55a6d8;
  color: #fff;
  font-weight: 500;
  font-size: 28px;
  line-height: 56px;
}
.new-l {
  width: 92px;
  text-align: center;
  border-right: 2px solid #4187b3;
}
.new-r {
  flex: 1;
  display: flex;
  align-items: center;
  justify-content: center;
}
.new-r svg {
  color: #fff;
}

/* database table */
.table {
  height: 1214px;
  flex: none;
  overflow: hidden;
  border-top: 2px solid #ededeb;
  border-bottom: 2px solid #ededeb;
}
.thead,
.tr {
  display: grid;
  grid-template-columns: 200px 502px 514px 400px 329px 125px;
  border-bottom: 2px solid #ededeb;
}
.thead {
  height: 66px;
}
.th {
  display: flex;
  align-items: center;
  gap: 11px;
  padding-left: 16px;
  border-right: 2px solid #ededeb;
  color: #8b8a86;
  letter-spacing: -0.2px;
}
.th-status {
  gap: 14px;
}
.th-end {
  border-right: none;
  padding-left: 19px;
  gap: 42px;
  color: #a5a4a1;
}
.td {
  padding: 12px 0 10px 16px;
  border-right: 2px solid #ededeb;
  line-height: 42px;
  white-space: nowrap;
  letter-spacing: -0.28px;
}
.tr.first .td {
  padding-top: 13px;
}
.td:last-child {
  border-right: none;
}
.td.num,
.tr.first .td.num {
  display: flex;
  align-items: center;
  justify-content: flex-end;
  padding: 0 20px 0 0;
}
.link {
  font-weight: 500;
  letter-spacing: -0.12px;
  border-bottom: 2px solid #e0e0de;
}
.calc {
  flex: 1;
  display: flex;
  align-items: center;
  gap: 6px;
  margin-left: -193px;
  padding: 2px 0 0 229px;
  color: #a5a4a1;
  letter-spacing: -0.2px;
  background: linear-gradient(to right, rgba(255, 255, 255, 0) 70%, #fff 98%), linear-gradient(to bottom, #fff, #ecece9);
}
.v-track {
  width: 20px;
  flex: none;
  background-color: #ecece8;
}
.v-thumb {
  height: 1370px;
  background-color: #d0d0ca;
}
.h-track {
  height: 19px;
  flex: none;
  display: flex;
  background-color: #ecece8;
}
.h-thumb {
  width: 2085px;
  background-color: #c1c0ba;
}
.h-corner {
  width: 20px;
  margin-left: auto;
  background-color: #fff;
}
.help {
  position: absolute;
  right: 52px;
  bottom: 52px;
  width: 72px;
  height: 72px;
  border-radius: 50%;
  background-color: #fff;
  border: 2px solid #e4e4e2;
  box-shadow: 0 3px 6px rgba(0, 0, 0, 0.1);
  text-align: center;
  line-height: 66px;
  font-size: 36px;
  font-weight: 500;
}

/* dock */
.dock {
  position: relative;
  display: flex;
  align-items: flex-start;
  gap: 24px;
  width: 2310px;
  height: 116px;
  margin: 1px 0 0 284px;
  padding: 16px 18px 0;
  border: 2px solid rgba(255, 255, 255, 0.16);
  border-radius: 32px;
  background: linear-gradient(to right, #6f6490 0, #8f7591 260px, #b98a98 400px, #b98fae 530px, #9f8fe8 590px, #a093f0 1080px, #9a7fa8 1200px, #9b7d90 1250px, #a57f8a 1450px, #a98592 1680px, #806a90 1840px, #655a95 1920px, #6b60a0 100%);
}
.dk {
  position: relative;
  width: 74px;
  height: 76px;
  flex: none;
}
.dk > svg {
  width: 100%;
  height: 100%;
  display: block;
  overflow: visible;
}
.dk > svg.wide {
  width: 80px;
}
.dk.on::after {
  content: "";
  position: absolute;
  left: 34px;
  top: 85px;
  width: 6px;
  height: 9px;
  border-radius: 50%;
  background-color: #1a0c24;
}
.badge {
  position: absolute;
  right: -12px;
  top: -9px;
  width: 36px;
  height: 36px;
  border-radius: 50%;
  background-color: #e8534a;
  color: #fff;
  text-align: center;
  line-height: 36px;
  font-size: 22px;
  font-weight: 500;
}
.badge.b-disc {
  font-size: 14px;
}
.cal-m {
  font-size: 17px;
  font-weight: 600;
  fill: #fff;
}
.cal-d {
  font-size: 50px;
  font-weight: 300;
  letter-spacing: -1px;
  fill: #222;
}
.tv {
  font-size: 36px;
  font-weight: 500;
  fill: #fff;
}
.notion-n {
  font-family: "Liberation Serif", serif;
  font-size: 50px;
  font-weight: 700;
  fill: #111;
}
.dock-sep {
  width: 2px;
  height: 84px;
  margin: -1px 0 0 12px;
  flex: none;
  background-color: #2f2a60;
}
.folder {
  width: 88px;
}
.doc {
  width: 90px;
  margin-left: -14px;
}
.doc.d2 {
  width: 88px;
  margin-left: -15px;
}
.thumb {
  position: absolute;
  left: 0;
  top: 13px;
  width: 100%;
  height: 50px;
  background-color: #fff;
  display: flex;
  flex-direction: column;
  padding: 0 4px;
  gap: 2px;
}
.t-head {
  height: 6px;
  margin: 3px -4px 0;
  background-color: #c0622a;
}
.t-bar {
  height: 4px;
  margin: 3px -4px 0;
  background-color: #d8d8d8;
}
.t-lines {
  height: 24px;
  background: repeating-linear-gradient(to bottom, #9a9a9a 0, #9a9a9a 1px, #fff 1px, #fff 3px);
  opacity: 0.7;
}
.t-lines.short {
  height: 12px;
  width: 60%;
}
.t-foot {
  height: 12px;
  width: 50%;
  margin-left: 30px;
  background-color: #e8a0a0;
  opacity: 0.6;
}
.t-map {
  height: 24px;
  background: radial-gradient(circle at 30% 40%, #8a9ab8 0 3px, transparent 4px), radial-gradient(circle at 55% 60%, #8a9ab8 0 3px, transparent 4px), #e8ecf2;
}
.dk .thumb-s {
  position: absolute;
  right: 2px;
  top: 53px;
  width: 26px;
  height: 27px;
}
.trash {
  width: 66px;
  height: 88px;
  margin: -7px 0 0 -3px;
}
```
